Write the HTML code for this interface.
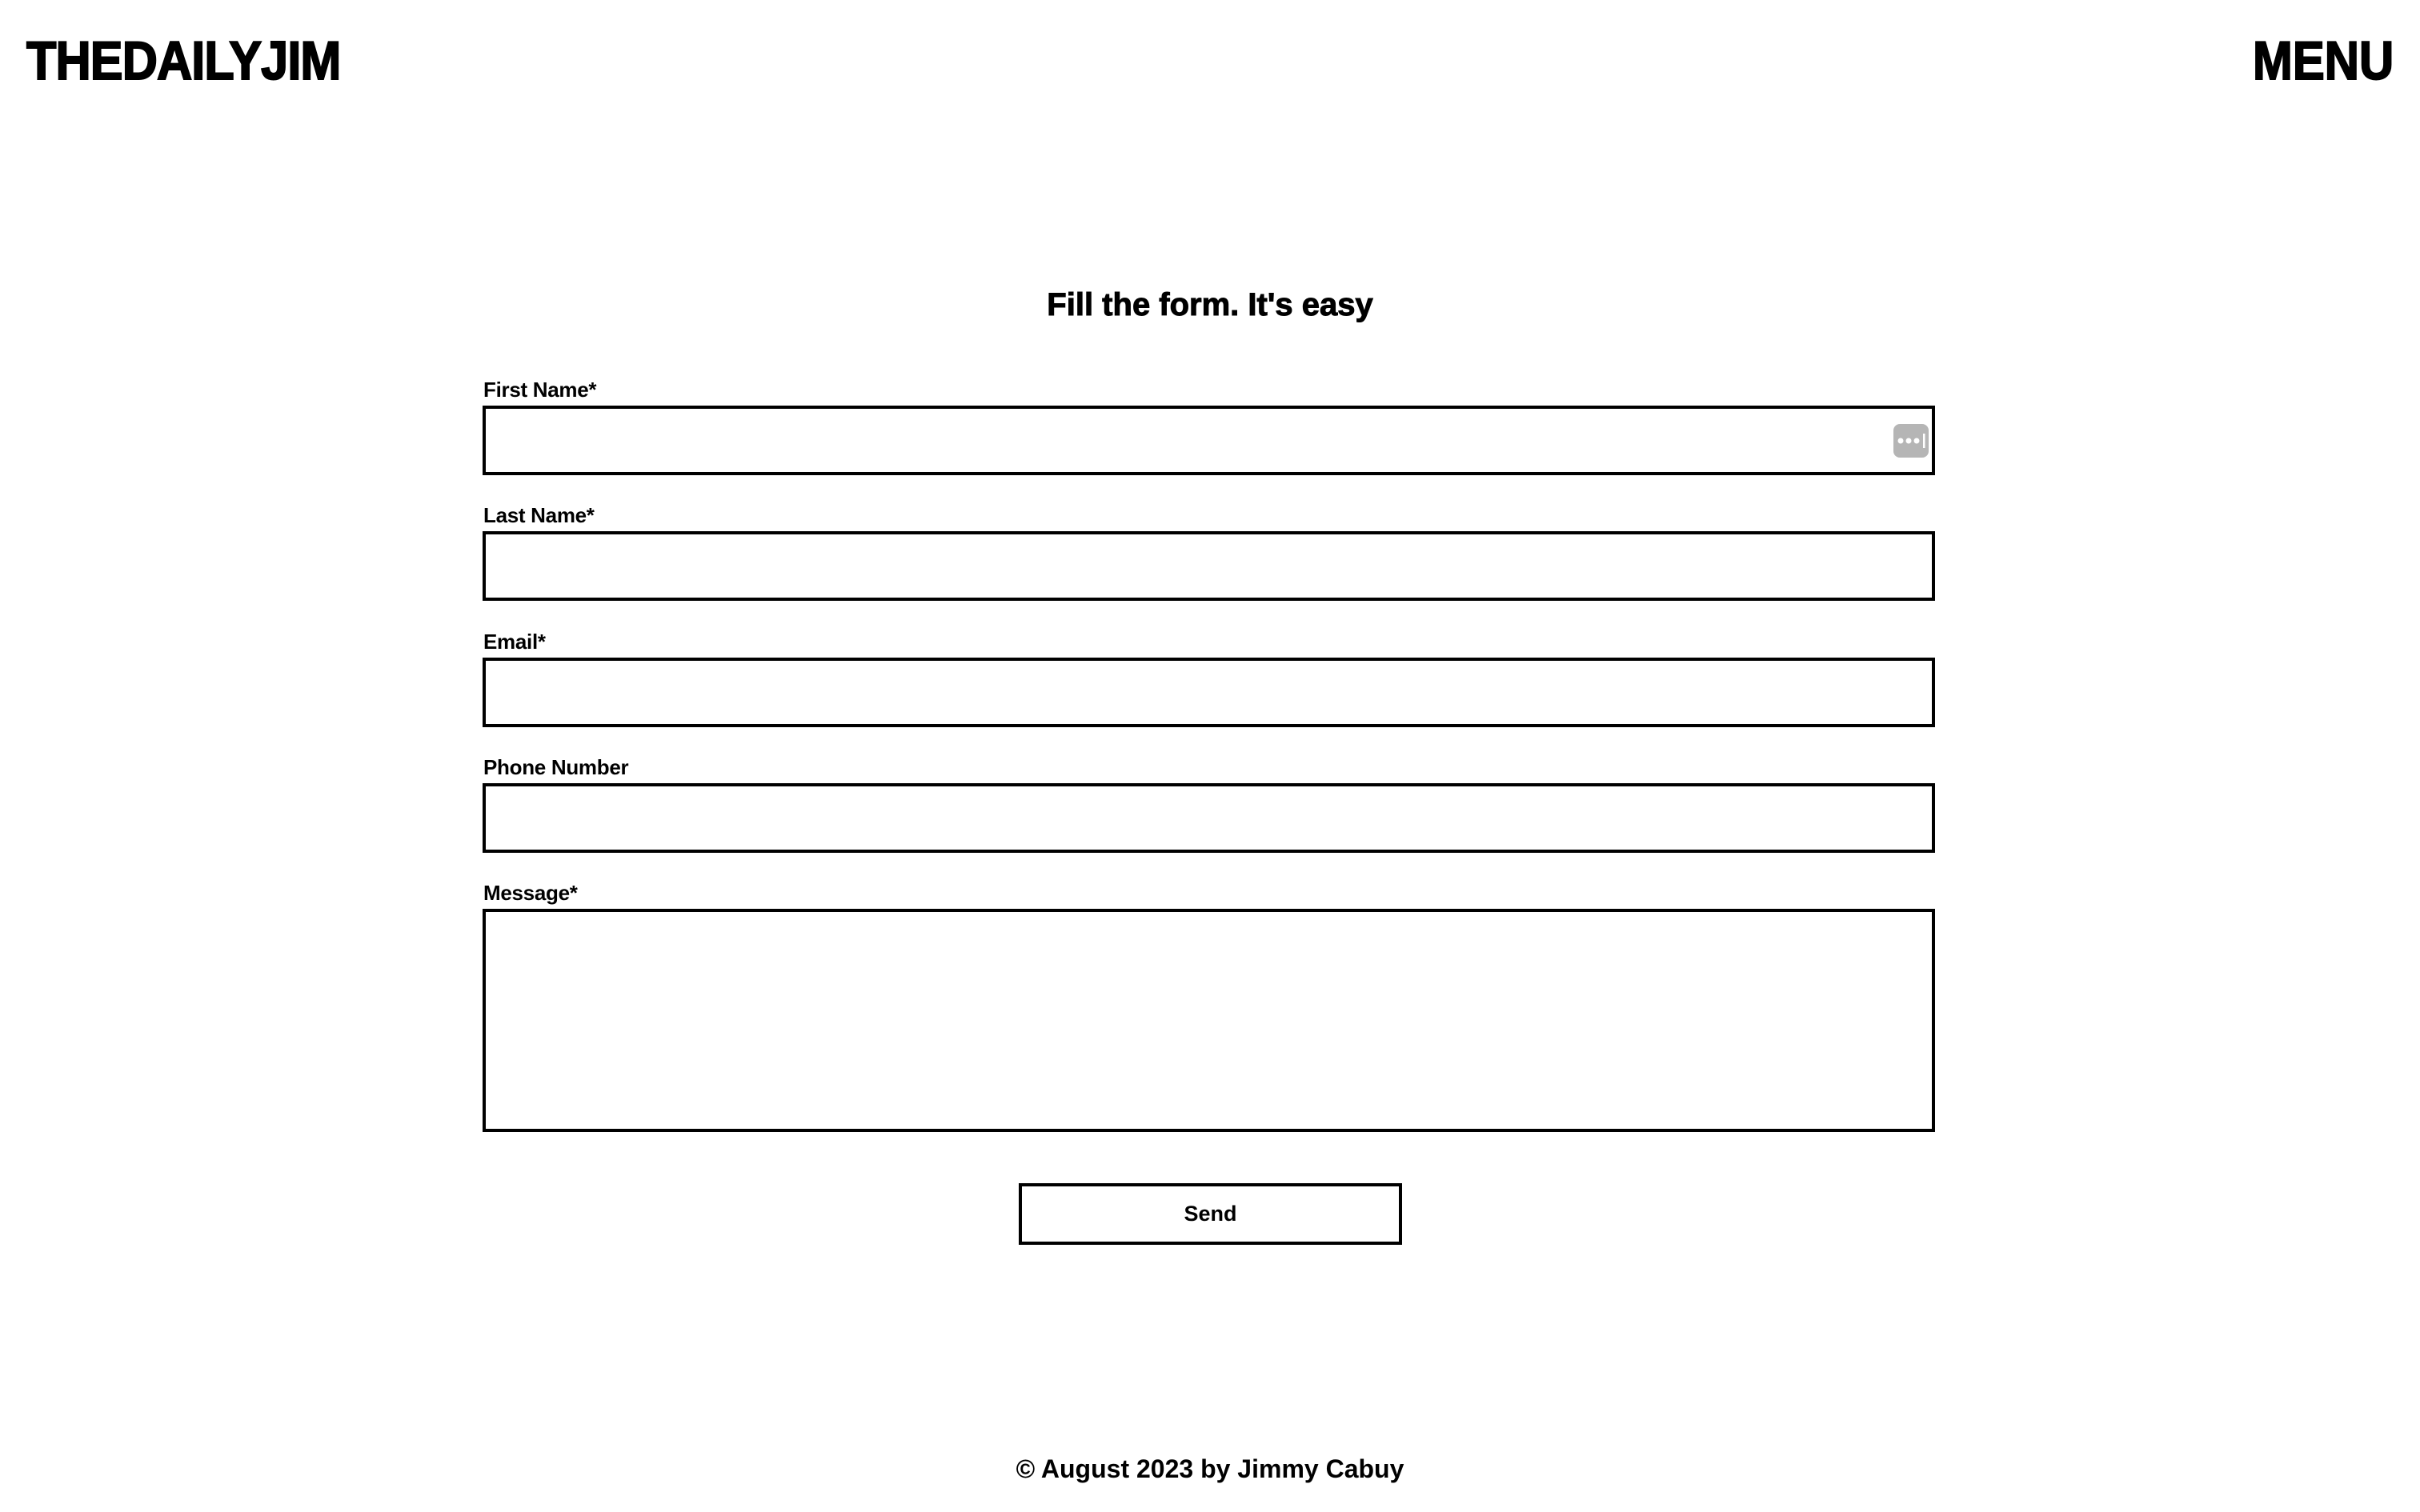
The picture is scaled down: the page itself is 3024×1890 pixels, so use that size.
<!DOCTYPE html>
<html><head><meta charset="utf-8"><style>
*{margin:0;padding:0;box-sizing:border-box}
body{width:3024px;height:1890px;background:#fff;position:relative;font-family:"Liberation Sans",sans-serif;color:#000;overflow:hidden}
.abs{position:absolute}
.logo{left:33px;top:40px;font-weight:bold;font-size:68px;line-height:72px;transform:scaleX(0.9);transform-origin:left top;letter-spacing:-1px;-webkit-text-stroke:2px #000}
.menu{right:33px;top:40px;font-weight:bold;font-size:68px;line-height:72px;transform:scaleX(0.88);transform-origin:right top;-webkit-text-stroke:2px #000}
.title{left:0;width:3024px;text-align:center;top:356px;font-weight:bold;font-size:40px;line-height:50px;-webkit-text-stroke:1px #000}
.lbl{left:604px;font-weight:bold;font-size:26px;line-height:30px;letter-spacing:-0.3px}
.box{left:603px;width:1815px;height:87px;border:4px solid #000}
.btn{left:1273px;top:1479px;width:479px;height:77px;border:4px solid #000;text-align:center;font-weight:bold;font-size:27px;line-height:69px}
.foot{left:0;width:3024px;text-align:center;top:1818px;font-size:32px;line-height:36px;font-weight:bold}
.ic{left:2366px;top:530px;width:44px;height:42px;background:#b5b5b5;border-radius:8px}
</style></head><body>
<div class="abs logo">THEDAILYJIM</div>
<div class="abs menu">MENU</div>
<div class="abs title">Fill the form. It's easy</div>

<div class="abs lbl" style="top:472px">First Name*</div>
<div class="abs box" style="top:507px"></div>
<div class="abs ic"><svg width="44" height="42"><circle cx="9" cy="21" r="3.5" fill="#fff"/><circle cx="19" cy="21" r="3.5" fill="#fff"/><circle cx="29" cy="21" r="3.5" fill="#fff"/><rect x="37" y="12" width="2.5" height="18" fill="#fff"/></svg></div>

<div class="abs lbl" style="top:629px">Last Name*</div>
<div class="abs box" style="top:664px"></div>

<div class="abs lbl" style="top:787px">Email*</div>
<div class="abs box" style="top:822px"></div>

<div class="abs lbl" style="top:944px">Phone Number</div>
<div class="abs box" style="top:979px"></div>

<div class="abs lbl" style="top:1101px">Message*</div>
<div class="abs box" style="top:1136px;height:279px"></div>

<div class="abs btn">Send</div>
<div class="abs foot">© August 2023 by Jimmy Cabuy</div>
</body></html>
